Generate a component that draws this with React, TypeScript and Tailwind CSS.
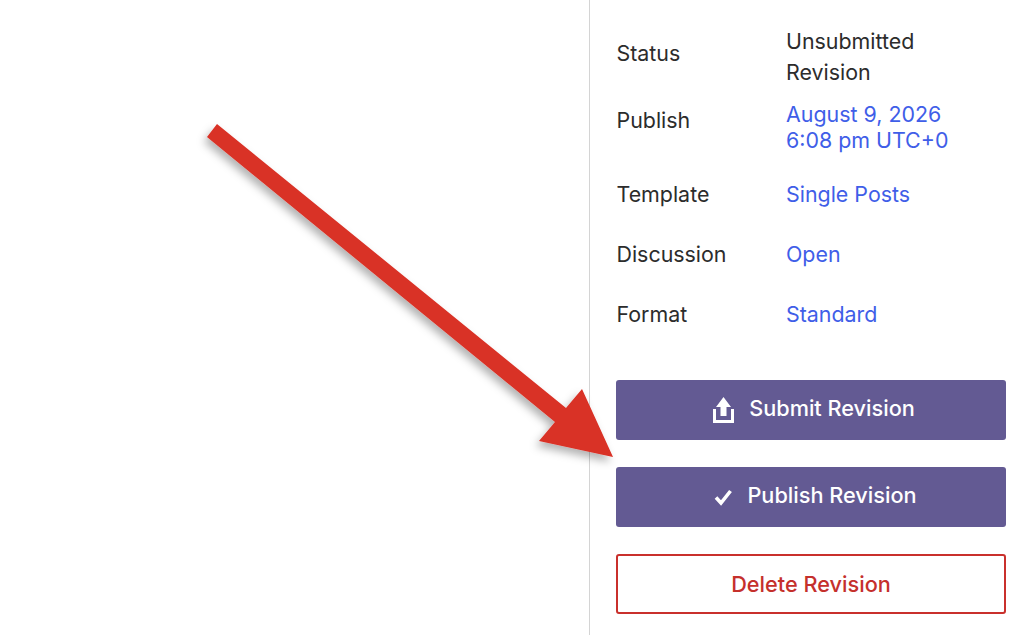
const labelClass = "w-[170px] shrink-0 pl-[0.5px] text-[#2c2c2c]"
const linkClass = "text-[#3f5ee8]"
const buttonClass = "flex h-[60px] w-[390px] items-center justify-center rounded-[3px] bg-[#635a93] text-[21.7px] font-medium text-white"

function UploadIcon() {
  return (
    <svg width="21" height="28" viewBox="0 0 21 28" fill="none">
      <path d="M10.5 1 L18 11 H13.5 V20 H7.5 V11 H3 Z" fill="white" />
      <path d="M1.5 13 V25.5 H19.5 V13" stroke="white" strokeWidth="3" />
    </svg>
  )
}

function CheckIcon() {
  return (
    <svg width="20" height="18" viewBox="0 0 20 18" fill="none">
      <path d="M3 9.5 L8 15 L17.5 3" stroke="white" strokeWidth="3.6" />
    </svg>
  )
}

function Arrow() {
  return (
    <svg className="absolute left-0 top-0 pointer-events-none" width="1024" height="635" viewBox="0 0 1024 635">
      <defs>
        <filter id="arrow-shadow" x="-10%" y="-10%" width="120%" height="120%">
          <feDropShadow dx="-3" dy="5" stdDeviation="4" floodColor="#000" floodOpacity="0.3" />
        </filter>
      </defs>
      <polygon
        points="217,124 566,408 582,389 613,457 539,441 555,422 207,137"
        fill="#d93025"
        filter="url(#arrow-shadow)"
      />
    </svg>
  )
}

export default function App() {
  return (
    <div className="relative flex h-[635px] w-[1024px] overflow-hidden bg-white font-['Inter',sans-serif] text-[21.4px] leading-[26px]">
      <div className="w-[589px] shrink-0 border-r border-[#d4d4d4] box-content" />
      <div className="flex w-[390px] flex-col pl-[26px] pt-[26px] box-content">
        <div className="flex items-start">
          <div className={`${labelClass} mt-[14px]`}>Status</div>
          <div className="leading-[31px] text-[#2c2c2c]">Unsubmitted<br />Revision</div>
        </div>
        <div className="mt-[13px] flex items-start">
          <div className={`${labelClass} mt-[6px]`}>Publish</div>
          <div className={linkClass}>August 9, 2026<br />6:08 pm UTC+0</div>
        </div>
        <div className="mt-[28px] flex items-start">
          <div className={labelClass}>Template</div>
          <div className={linkClass}>Single Posts</div>
        </div>
        <div className="mt-[34px] flex items-start">
          <div className={labelClass}>Discussion</div>
          <div className={linkClass}>Open</div>
        </div>
        <div className="mt-[34px] flex items-start">
          <div className={labelClass}>Format</div>
          <div className={linkClass}>Standard</div>
        </div>
        <div className="mt-[53px] flex flex-col gap-[27px]">
          <button className={`${buttonClass} gap-[15px] pl-[6px]`}>
            <UploadIcon />
            <span className="-mt-[5px]">Submit Revision</span>
          </button>
          <button className={`${buttonClass} gap-[14px] pl-[8px]`}>
            <CheckIcon />
            <span className="-mt-[5px]">Publish Revision</span>
          </button>
          <button className="flex h-[60px] w-[390px] items-center justify-center rounded-[3px] border-2 border-[#c9302c] bg-white text-[21.7px] font-medium text-[#c5302c]">
            Delete Revision
          </button>
        </div>
      </div>
      <Arrow />
    </div>
  )
}
